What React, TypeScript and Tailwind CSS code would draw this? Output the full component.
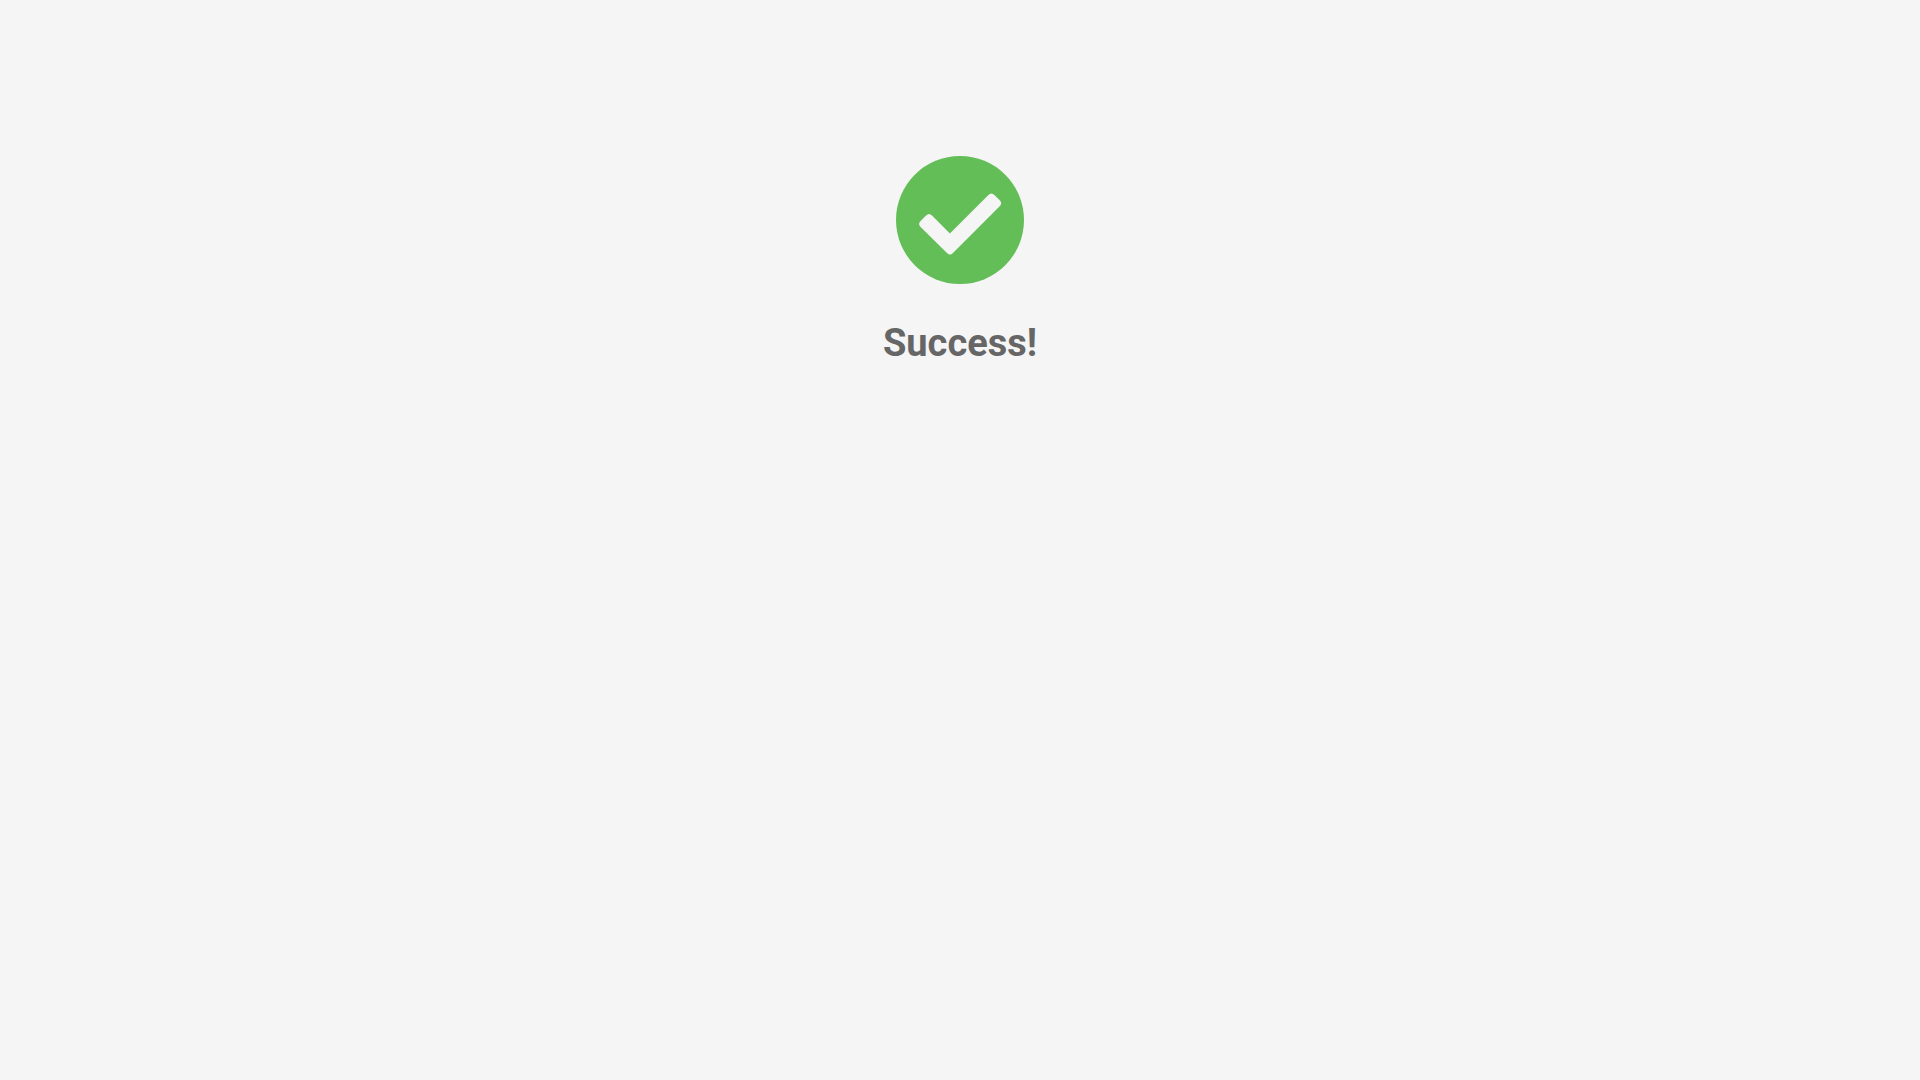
export default function App() {
  return (
    <div className="min-h-screen bg-[#f5f5f5] flex flex-col items-center pt-[156px] font-['Roboto',sans-serif]">
      <svg className="h-32 w-32" viewBox="0 0 128 128">
        <circle cx="64" cy="64" r="64" fill="#64be58" />
        <path
          fill="#f5f5f5"
          d="M53.9 77.4 L92.4 38.9 Q95.4 35.9 98.4 38.9 L103.7 44.2 Q106.7 47.2 103.7 50.2 L57 97.1 Q54 100.1 51 97.1 L24.6 71 Q21.6 68 24.6 65 L30 59.6 Q33 56.6 36 59.6 Z"
        />
      </svg>
      <h1 className="mt-[32px] text-[38px] leading-[54px] font-bold text-[#666666]">Success!</h1>
    </div>
  );
}
